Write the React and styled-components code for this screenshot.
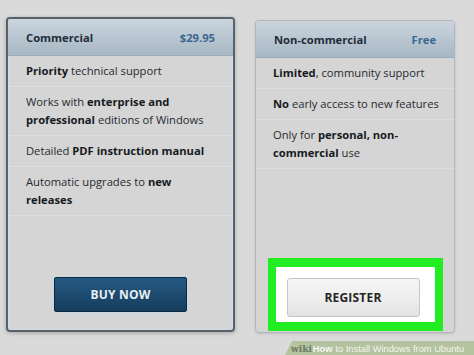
import React from 'react';
import styled, { createGlobalStyle } from 'styled-components';

const GlobalStyle = createGlobalStyle`
    html, body {
        margin: 0;
        padding: 0;
        background: #dadada;
        font-family: "Open Sans", "Noto Sans", sans-serif;
    }
`;

const Page = styled.div`
    width: 474px;
    height: 355px;
    overflow: hidden;
    display: flex;
    flex-direction: column;
    box-sizing: border-box;
    padding: 17px 0 0 6px;
`;

const Cards = styled.div`
    display: flex;
    gap: 20px;
    align-items: flex-start;
`;

const Card = styled.div`
    display: flex;
    flex-direction: column;
    box-sizing: border-box;
    width: ${(p) => p.$width}px;
    height: ${(p) => p.$height}px;
    margin-top: ${(p) => p.$offset || 0}px;
    background: #d5d5d5;
    border: ${(p) => (p.$featured ? '2px solid #56616c' : '1px solid #b3b6b9')};
    border-radius: 4px;
    box-shadow: ${(p) =>
        p.$featured
            ? 'inset 0 0 0 1px #d3dce4, 0 1px 4px rgba(0, 0, 0, 0.25)'
            : '0 1px 3px rgba(0, 0, 0, 0.12)'};
    overflow: hidden;
`;

const Header = styled.div`
    display: flex;
    align-items: center;
    justify-content: space-between;
    height: 37px;
    flex-shrink: 0;
    padding: 0 18px;
    background: linear-gradient(180deg, #cbd5de 0%, #b9c6d1 50%, #a8b7c3 100%);
    border-bottom: 1px solid #9aabb8;
    box-sizing: border-box;
    font-size: 11.2px;
    font-weight: 700;
`;

const Title = styled.span`
    color: #1f2c39;
`;

const Price = styled.span`
    color: #3a6890;
`;

const Feature = styled.div`
    padding: 6px ${(p) => p.$right}px 6px ${(p) => p.$indent}px;
    font-size: 11.2px;
    line-height: 18px;
    color: #252a2f;
    border-bottom: 1px solid #dedede;

    b {
        font-weight: 700;
        color: #161a1e;
    }
`;

const Bottom = styled.div`
    margin-top: auto;
    display: flex;
    justify-content: center;
    padding-bottom: ${(p) => p.$pad}px;
`;

const BuyButton = styled.button`
    width: 133px;
    height: 35px;
    border: 1px solid #0e2a40;
    border-radius: 2px;
    background: linear-gradient(180deg, #265a82 0%, #1c4a6e 55%, #153c5b 100%);
    box-shadow: 0 0 0 1px #c9d6e0;
    color: #e9eef3;
    font-family: inherit;
    font-size: 12px;
    font-weight: 700;
    letter-spacing: 0.2px;
`;

const Highlight = styled.div`
    border: solid #22ec22;
    border-width: 9px 8px;
    background: #ffffff;
    padding: 11px 15px 5px 11px;
    margin-bottom: 1px;
`;

const RegisterButton = styled.button`
    display: block;
    width: 133px;
    height: 39px;
    border: 1px solid #c6c6c6;
    border-radius: 3px;
    background: linear-gradient(180deg, #f6f6f6 0%, #ececec 60%, #e2e2e2 100%);
    color: #262626;
    font-family: inherit;
    font-size: 12px;
    font-weight: 700;
    letter-spacing: 0.2px;
`;

const Footer = styled.div`
    display: flex;
    justify-content: flex-end;
    margin-top: 8px;
`;

const Watermark = styled.div`
    width: 190px;
    height: 16px;
    padding-left: 7px;
    box-sizing: border-box;
    background: #b3c29f;
    clip-path: polygon(8px 0, 100% 0, 100% 100%, 0 100%);
    display: flex;
    align-items: center;
    font-family: "Liberation Sans", Arial, sans-serif;
    font-size: 9.3px;
    color: #f3f6ef;
    white-space: nowrap;
`;

const Wiki = styled.span`
    font-family: "DejaVu Serif", serif;
    font-weight: 700;
    font-size: 9px;
    color: #6f7a64;
    margin-right: 1px;
`;

const How = styled.span`
    font-weight: 700;
    margin-right: 3px;
`;

const commercial = [
    <><b>Priority</b> technical support</>,
    <>Works with <b>enterprise and professional</b> editions of Windows</>,
    <>Detailed <b>PDF instruction manual</b></>,
    <>Automatic upgrades to <b>new releases</b></>,
];

const free = [
    <><b>Limited</b>, community support</>,
    <><b>No</b> early access to new features</>,
    <>Only for <b>personal, non-commercial</b> use</>,
];

export default function App() {
    return (
        <Page>
            <GlobalStyle />
            <Cards>
                <Card $featured $width={229} $height={315}>
                    <Header>
                        <Title>Commercial</Title>
                        <Price>$29.95</Price>
                    </Header>
                    {commercial.map((item, i) => (
                        <Feature key={i} $indent={18} $right={20}>{item}</Feature>
                    ))}
                    <Bottom $pad={18}>
                        <BuyButton>BUY NOW</BuyButton>
                    </Bottom>
                </Card>
                <Card $width={200} $height={313} $offset={3}>
                    <Header>
                        <Title>Non-commercial</Title>
                        <Price>Free</Price>
                    </Header>
                    {free.map((item, i) => (
                        <Feature key={i} $indent={17} $right={8}>{item}</Feature>
                    ))}
                    <Bottom $pad={0}>
                        <Highlight>
                            <RegisterButton>REGISTER</RegisterButton>
                        </Highlight>
                    </Bottom>
                </Card>
            </Cards>
            <Footer>
                <Watermark>
                    <Wiki>wiki</Wiki>
                    <How>How</How>
                    to Install Windows from Ubuntu
                </Watermark>
            </Footer>
        </Page>
    );
}
